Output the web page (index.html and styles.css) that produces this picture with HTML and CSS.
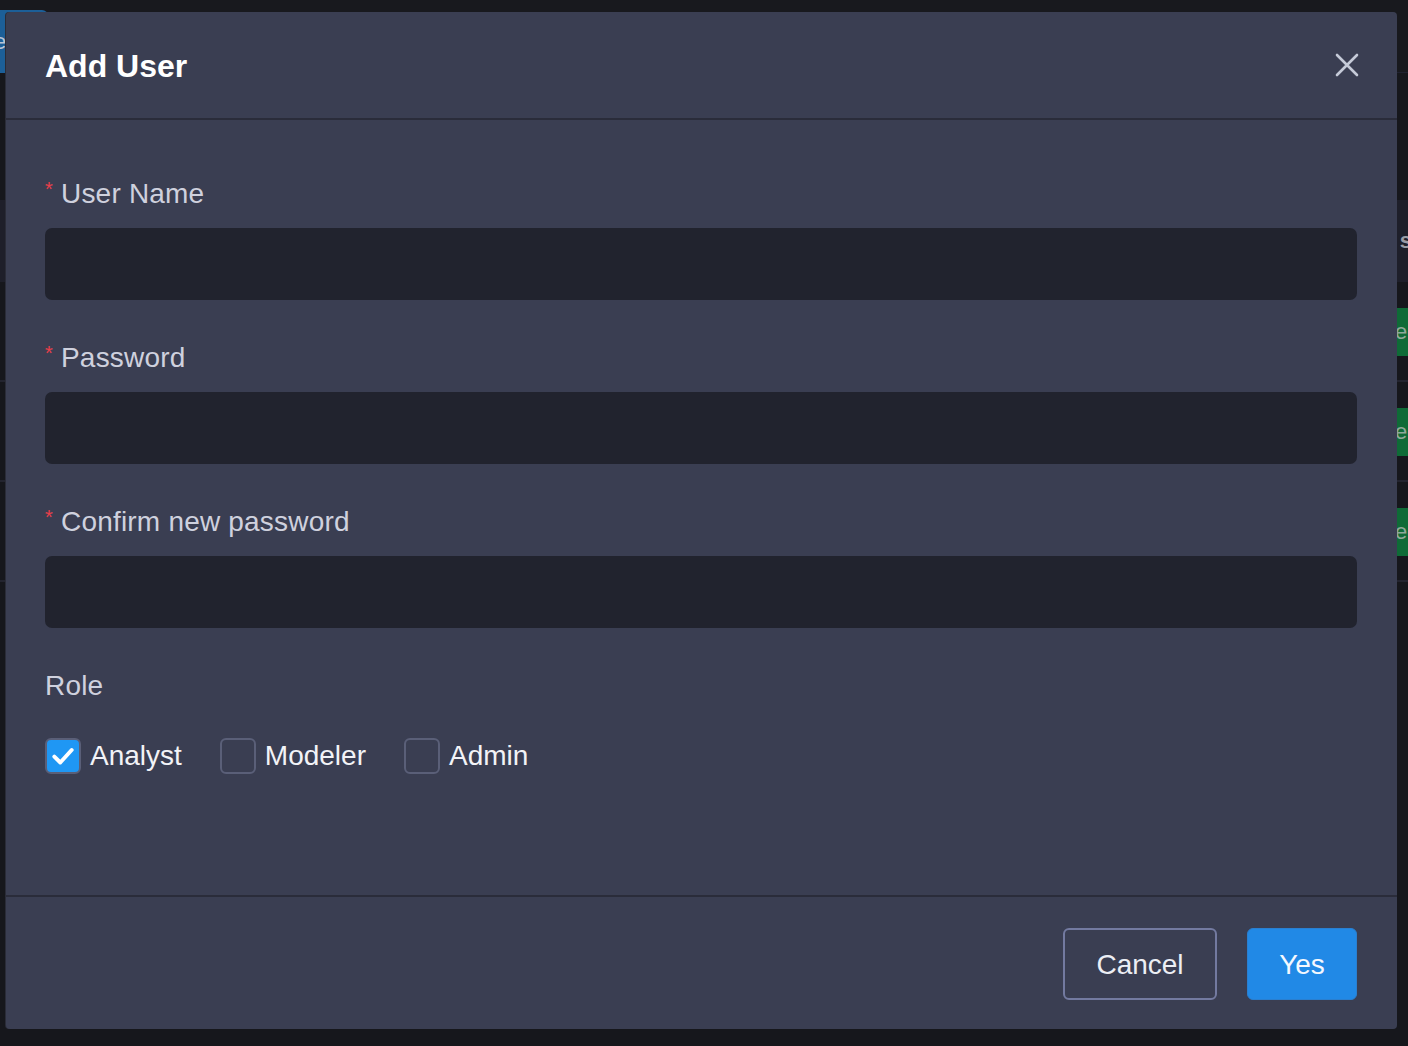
FILE: index.html
```html
<!DOCTYPE html>
<html>
<head>
<meta charset="utf-8">
<link rel="stylesheet" href="styles.css">
</head>
<body>
<div class="page">
  <div class="topbar">
    <div class="topbtn">e</div>
  </div>
  <div class="table">
    <div class="thead"><span class="th-right">s</span></div>
    <div class="row"><span class="tag">ed</span></div>
    <div class="row"><span class="tag">ed</span></div>
    <div class="row"><span class="tag">ed</span></div>
  </div>
</div>

<div class="modal">
  <div class="modal-header">
    <h2 class="title">Add User</h2>
    <button class="close" aria-label="Close">
      <svg width="24" height="24" viewBox="0 0 24 24"><path d="M2 2 L22 22 M22 2 L2 22" stroke="#c5cad8" stroke-width="2.6" stroke-linecap="round" fill="none"/></svg>
    </button>
  </div>
  <div class="modal-body">
    <div class="field">
      <label class="label"><span class="req">*</span>User Name</label>
      <div class="input"></div>
    </div>
    <div class="field">
      <label class="label"><span class="req">*</span>Password</label>
      <div class="input"></div>
    </div>
    <div class="field">
      <label class="label"><span class="req">*</span>Confirm new password</label>
      <div class="input"></div>
    </div>
    <div class="field">
      <label class="label plain">Role</label>
      <div class="checks">
        <div class="check"><span class="box checked"><svg width="26" height="26" viewBox="0 0 24 24"><path d="M4 12.5 L9.5 18 L20 6.5" stroke="#fff" stroke-width="3.6" stroke-linecap="round" stroke-linejoin="round" fill="none"/></svg></span><span class="ctext">Analyst</span></div>
        <div class="check"><span class="box"></span><span class="ctext">Modeler</span></div>
        <div class="check"><span class="box"></span><span class="ctext">Admin</span></div>
      </div>
    </div>
  </div>
  <div class="modal-footer">
    <button class="btn cancel">Cancel</button>
    <button class="btn yes">Yes</button>
  </div>
</div>
</body>
</html>
```

FILE: styles.css
```css
html, body {
  margin: 0;
  padding: 0;
  background: #16171c;
  font-family: "Liberation Sans", Arial, sans-serif;
  width: 1408px;
  height: 1046px;
  overflow: hidden;
}

.page {
  width: 1408px;
  height: 1046px;
  display: flex;
  flex-direction: column;
}

.topbar {
  height: 73px;
  padding-top: 10px;
  box-sizing: border-box;
  border-bottom: 1px solid #202230;
  background: #18191e;
}

.topbtn {
  width: 48px;
  height: 63px;
  background: #1c5f98;
  border-radius: 0 6px 0 0;
  color: #b9c4d4;
  font-size: 22px;
  line-height: 63px;
  text-indent: -6px;
  overflow: hidden;
}

.table {
  margin-top: 127px;
  display: flex;
  flex-direction: column;
}

.thead {
  height: 82px;
  background: #1e1f2a;
  display: flex;
  justify-content: flex-end;
  align-items: center;
}

.th-right {
  color: #9a9ca6;
  font-weight: bold;
  font-size: 22px;
  margin-right: -4px;
}

.row {
  height: 100px;
  border-bottom: 2px solid #23242f;
  box-sizing: border-box;
  display: flex;
  justify-content: flex-end;
  align-items: flex-start;
}

.tag {
  margin-top: 26px;
  width: 11px;
  height: 48px;
  background: #0f6b37;
  color: #8fa89a;
  font-size: 22px;
  line-height: 48px;
  overflow: hidden;
  text-indent: -2px;
}

.modal {
  position: absolute;
  left: 6px;
  top: 12px;
  width: 1391px;
  height: 1017px;
  background: #3a3e52;
  border-radius: 4px;
  display: flex;
  flex-direction: column;
  box-shadow: -1px 0 0 #2a2c38;
}

.modal-header {
  height: 108px;
  box-sizing: border-box;
  border-bottom: 2px solid #2a2c3a;
  display: flex;
  align-items: center;
  justify-content: space-between;
  padding: 0 39px 0 39px;
}

.title {
  margin: 0;
  margin-top: 2px;
  font-size: 32px;
  font-weight: bold;
  color: #ffffff;
}

.close {
  background: none;
  border: 0;
  padding: 0;
  width: 24px;
  height: 24px;
  margin-right: -1px;
  margin-top: 0;
  display: flex;
}

.modal-body {
  flex: 1;
  padding: 54px 40px 0 39px;
  display: flex;
  flex-direction: column;
  gap: 38px;
  border-bottom: 2px solid #2a2c3a;
}

.field {
  display: flex;
  flex-direction: column;
  gap: 14px;
}

.label {
  display: flex;
  align-items: center;
  height: 40px;
  font-size: 28px;
  letter-spacing: 0.2px;
  color: #cfd1de;
}

.req {
  color: #ea3f4a;
  font-size: 20px;
  margin-right: 8px;
  margin-top: -10px;
}

.input {
  height: 72px;
  background: #21232e;
  border-radius: 7px;
}

.checks {
  display: flex;
  align-items: center;
  gap: 38px;
  margin-top: 18px;
}

.check {
  display: flex;
  align-items: center;
  gap: 9px;
}

.box {
  width: 36px;
  height: 36px;
  box-sizing: border-box;
  border: 2px solid #5a5f78;
  border-radius: 6px;
  display: flex;
  align-items: center;
  justify-content: center;
}

.box.checked {
  background: #1f97f4;
}

.ctext {
  font-size: 28px;
  color: #f2f3f7;
}

.modal-footer {
  height: 132px;
  box-sizing: border-box;
  display: flex;
  justify-content: flex-end;
  align-items: flex-start;
  padding: 31px 40px 0 0;
  gap: 30px;
}

.btn {
  height: 72px;
  box-sizing: border-box;
  border-radius: 6px;
  font-family: "Liberation Sans", Arial, sans-serif;
  font-size: 28px;
  padding-top: 2px;
  cursor: pointer;
}

.cancel {
  width: 154px;
  background: transparent;
  border: 2px solid #737aa0;
  color: #eceef4;
}

.yes {
  width: 110px;
  background: #2189e6;
  border: 1px solid #2a7fd0;
  color: #f4f8ff;
}
```
